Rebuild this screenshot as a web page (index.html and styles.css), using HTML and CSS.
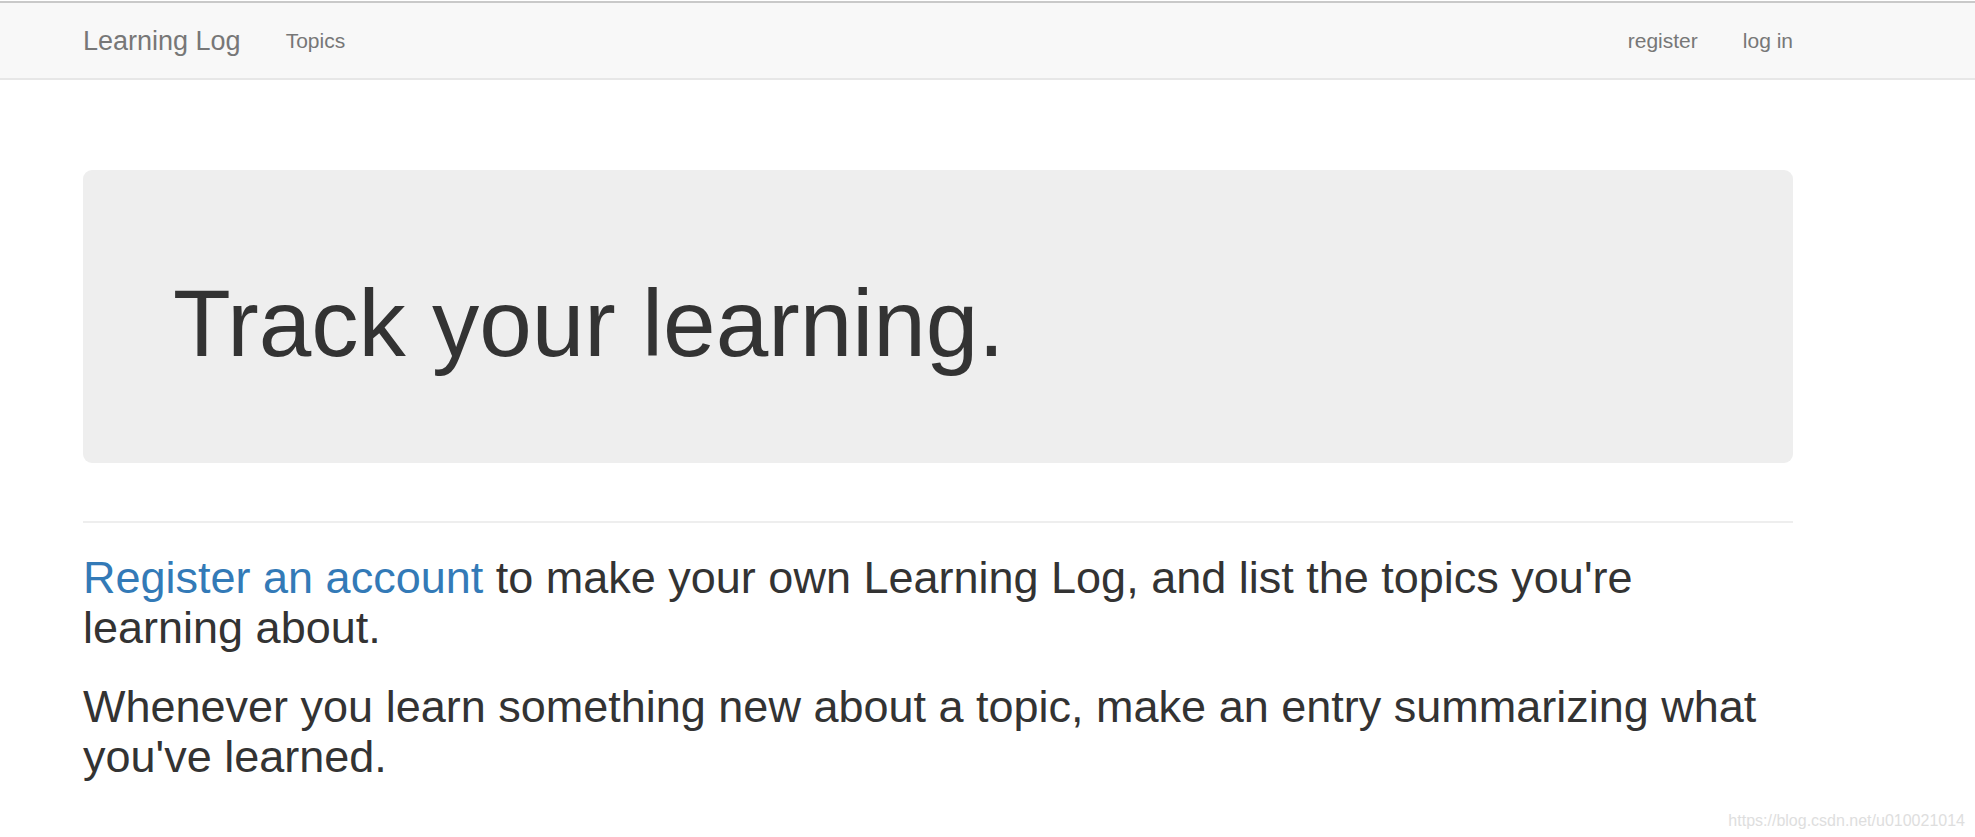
FILE: index.html
```html
<!DOCTYPE html>
<html lang="en">
<head>
<meta charset="utf-8">
<title>Learning Log</title>
<link rel="stylesheet" href="styles.css">
</head>
<body>
  <div class="chrome-line"></div>
  <nav class="navbar">
    <div class="container nav-inner">
      <div class="nav-left">
        <a class="brand" href="#">Learning Log</a>
        <ul class="nav">
          <li><a href="#">Topics</a></li>
        </ul>
      </div>
      <ul class="nav nav-right">
        <li><a href="#">register</a></li>
        <li><a href="#">log in</a></li>
      </ul>
    </div>
  </nav>

  <div class="container main">
    <div class="page-header">
      <div class="jumbotron">
        <h1>Track your learning.</h1>
      </div>
    </div>
    <div class="content">
      <h2><a href="#">Register an account</a> to make your own Learning Log, and list the topics you're learning about.</h2>
      <h2>Whenever you learn something new about a topic, make an entry summarizing what you've learned.</h2>
    </div>
  </div>

  <div class="watermark">https://blog.csdn.net/u010021014</div>
</body>
</html>
```

FILE: styles.css
```css
* { box-sizing: border-box; }

html, body {
  margin: 0;
  padding: 0;
}

body {
  font-family: "Liberation Sans", Arial, Helvetica, sans-serif;
  font-size: 21px;
  line-height: 1.42857;
  color: #333;
  background: #fff;
  padding-top: 1px;
  min-height: 837px;
  position: relative;
}

a {
  color: #337ab7;
  text-decoration: none;
}

.chrome-line {
  height: 2px;
  background: #c9c9c9;
}

.container {
  width: 1755px;
  margin-left: 60.5px;
  padding: 0 22.5px;
}

.main {
  display: flow-root;
}

.navbar {
  background: #f8f8f8;
  border-bottom: 2px solid #e7e7e7;
  height: 77px;
  margin-bottom: 30px;
}

.nav-inner {
  display: flex;
  justify-content: space-between;
  align-items: flex-start;
  height: 75px;
}

.nav-left {
  display: flex;
  align-items: flex-start;
}

.brand {
  display: block;
  height: 75px;
  padding: 22.5px;
  margin-left: -22.5px;
  font-size: 27px;
  line-height: 30px;
  color: #777;
}

.nav {
  display: flex;
  list-style: none;
  margin: 0;
  padding: 0;
}

.nav li a {
  display: block;
  padding: 22.5px;
  font-size: 21px;
  line-height: 30px;
  color: #777;
}

.nav-right {
  margin-right: -22.5px;
}

.page-header {
  margin: 60px 0 30px;
  padding-bottom: 13.5px;
  border-bottom: 2px solid #eee;
}

.jumbotron {
  background: #eee;
  border-radius: 9px;
  padding: 72px 90px;
  margin-bottom: 45px;
}

.jumbotron h1 {
  margin: 30px 0 15px;
  font-size: 94.5px;
  line-height: 1.1;
  font-weight: 500;
  color: #333;
}

.content h2 {
  margin: 30px 0 15px;
  font-size: 45px;
  line-height: 1.1;
  font-weight: 500;
  color: #333;
}

.content h2:first-child {
  margin-top: 0;
}

.watermark {
  position: absolute;
  right: 10px;
  bottom: 7px;
  font-size: 16px;
  line-height: 18px;
  color: #dedede;
}
```
